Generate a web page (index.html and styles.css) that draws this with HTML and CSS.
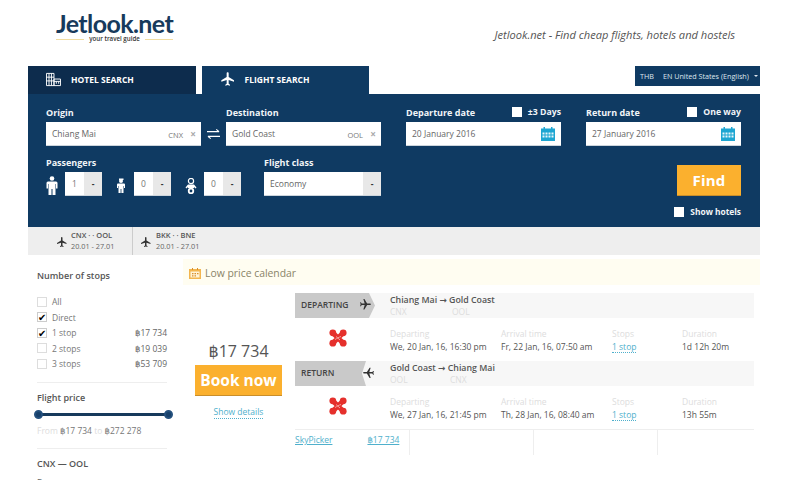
FILE: index.html
```html
<!DOCTYPE html>
<html lang="en">
<head>
<meta charset="utf-8">
<title>Jetlook.net</title>
<link rel="stylesheet" href="styles.css">
</head>
<body>
<svg class="defs" width="0" height="0" aria-hidden="true">
  <defs>
    <symbol id="plane" viewBox="0 0 24 24"><path d="M21 16v-2l-8-5V3.500c0-.83-.67-1.500-1.500-1.500S10 2.670 10 3.500V9l-8 5v2l8-2.500V19l-2 1.500V22l3.500-1 3.500 1v-1.500L13 19v-5.500l8 2.500z"/></symbol>
    <symbol id="cal" viewBox="0 0 16 16"><path fill="#1ea6d2" d="M1 2.500h2.500V1h1.500v1.500h6V1h1.500v1.500H15V15H1z"/><path fill="#e8f6fb" d="M2.500 6.500h2v2h-2zm3 0h2v2h-2zm3 0h2v2h-2zm3 0h2v2h-2zm-9 3h2v2h-2zm3 0h2v2h-2zm3 0h2v2h-2zm3 0h2v2h-2z"/></symbol>
    <symbol id="flower" viewBox="0 0 18 18"><path stroke="#e5302c" stroke-width="5" fill="none" d="M4 4l10 10M14 4L4 14"/><circle cx="3.800" cy="3.800" r="3.400" fill="#e5302c"/><circle cx="14.200" cy="3.800" r="3.400" fill="#e5302c"/><circle cx="3.800" cy="14.200" r="3.400" fill="#e5302c"/><circle cx="14.200" cy="14.200" r="3.400" fill="#e5302c"/><path fill="none" stroke="#f4a19b" stroke-width="1" d="M6 10.500C8 9.500 10 8 12 7.500M7 7.500l4 3.500"/></symbol>
  </defs>
</svg>

<div class="page">
  <header class="top">
    <div class="logo">
      <div class="logo-name">Jetlook.net</div>
      <div class="logo-tag"><span>your travel guide</span></div>
    </div>
    <div class="slogan">Jetlook.net - Find cheap flights, hotels and hostels</div>
  </header>

  <div class="tabbar">
    <div class="tab tab-hotel">
      <svg class="tab-icon" viewBox="0 0 16 14"><path fill="none" stroke="#fff" stroke-width="1" d="M.5.500h8v13h-8zM3.200.500v13M5.800.500v13M.5 4.500h8M.5 8.500h8M8.500 6.500h7v7h-7zM11 9v2.500M13.500 9v2.500M8.500 9h7"/></svg>
      HOTEL SEARCH
    </div>
    <div class="tab tab-flight">
      <svg class="tab-icon plane-right"><use href="#plane"/></svg>
      FLIGHT SEARCH
    </div>
    <div class="locale"><span>THB</span><span>EN United States (English)</span><i class="caret"></i></div>
  </div>

  <section class="panel">
    <div class="pane-left">
      <div class="route">
        <div class="field">
          <label class="lbl">Origin</label>
          <div class="input"><span class="val">Chiang Mai</span><span class="code">CNX</span><span class="x">×</span></div>
        </div>
        <svg class="swap" viewBox="0 0 14 12"><path fill="none" stroke="#fff" stroke-width="1.200" d="M0 3.500h13M10 1l3 2.500M14 8.500H1M4 11L1 8.500"/></svg>
        <div class="field">
          <label class="lbl">Destination</label>
          <div class="input"><span class="val">Gold Coast</span><span class="code">OOL</span><span class="x">×</span></div>
        </div>
      </div>
      <div class="pax-row">
        <div class="pax">
          <label class="lbl">Passengers</label>
          <div class="pax-controls">
            <svg class="person adult" viewBox="0 0 12 19"><circle cx="6" cy="2.500" r="2.300" fill="#fff"/><path fill="#fff" d="M2 5.500h8a1.500 1.500 0 0 1 1.500 1.500v5.500h-1.500V8H9.500v11H6.500v-6h-1v6H2.500V8H2v4.500H.5V7A1.500 1.500 0 0 1 2 5.500z"/></svg>
            <div class="spin"><span>1</span><b>-</b></div>
            <svg class="person child" viewBox="0 0 10 15"><circle cx="5" cy="3" r="2" fill="#fff"/><path fill="#fff" d="M3 .5h4.500v1.500H3zM2 5.500h6a1 1 0 0 1 1 1V10H8v-2h-.500v7H5.400v-4h-.8v4H2.500V8H2v2H1V6.500a1 1 0 0 1 1-1z"/></svg>
            <div class="spin"><span>0</span><b>-</b></div>
            <svg class="person baby" viewBox="0 0 12 16"><circle cx="6" cy="3" r="2.600" fill="none" stroke="#fff" stroke-width="1.200"/><path fill="#fff" d="M3 6.500h6l2.500 3-1 1L9 9v1H3V9l-1.500 1.500-1-1z"/><circle cx="6" cy="13" r="2.300" fill="none" stroke="#fff" stroke-width="1.800"/></svg>
            <div class="spin"><span>0</span><b>-</b></div>
          </div>
        </div>
        <div class="cabin">
          <label class="lbl">Flight class</label>
          <div class="select"><span>Economy</span><b>-</b></div>
        </div>
      </div>
    </div>
    <div class="pane-right">
      <div class="dates">
        <div class="field">
          <div class="lbl-row"><label class="lbl">Departure date</label><span class="check"><i class="box"></i>±3 Days</span></div>
          <div class="input"><span class="val">20 January 2016</span><svg class="cal-icon"><use href="#cal"/></svg></div>
        </div>
        <div class="field">
          <div class="lbl-row"><label class="lbl">Return date</label><span class="check"><i class="box"></i>One way</span></div>
          <div class="input"><span class="val">27 January 2016</span><svg class="cal-icon"><use href="#cal"/></svg></div>
        </div>
      </div>
      <div class="find-col">
        <button class="find">Find</button>
        <span class="check show-hotels"><i class="box"></i>Show hotels</span>
      </div>
    </div>
  </section>

  <nav class="history">
    <div class="hist-item first">
      <svg class="hist-plane"><use href="#plane"/></svg>
      <div><div class="hist-route">CNX · · OOL</div><div class="hist-date">20.01 - 27.01</div></div>
    </div>
    <div class="hist-item">
      <svg class="hist-plane"><use href="#plane"/></svg>
      <div><div class="hist-route">BKK · · BNE</div><div class="hist-date">20.01 - 27.01</div></div>
    </div>
  </nav>

  <div class="body">
    <aside class="filters">
      <h3 class="f-title stops-title">Number of stops</h3>
      <ul class="stops">
        <li><i class="cb"></i><span class="s-name">All</span></li>
        <li><i class="cb on">✔</i><span class="s-name">Direct</span></li>
        <li><i class="cb on">✔</i><span class="s-name">1 stop</span><span class="s-price">฿17 734</span></li>
        <li><i class="cb"></i><span class="s-name">2 stops</span><span class="s-price">฿19 039</span></li>
        <li><i class="cb"></i><span class="s-name">3 stops</span><span class="s-price">฿53 709</span></li>
      </ul>
      <h3 class="f-title price-title">Flight price</h3>
      <div class="slider"><i class="knob"></i><i class="knob"></i></div>
      <div class="range"><em>From</em> ฿17 734 <em>to</em> ฿272 278</div>
      <h3 class="f-title leg-title">CNX — OOL</h3>
      <div class="clip-line">Departure</div>
    </aside>

    <main class="results">
      <div class="calendar">
        <svg class="cal-mini" viewBox="0 0 12 11"><path fill="#f3b54e" d="M0 1h12v10H0z"/><path fill="#fff3d6" d="M1.500 3.500h9v6h-9z"/><path fill="#d98f2b" d="M3 0h1v2H3zm5 0h1v2H8zM3 5h1.500v1.200H3zm2.500 0H7v1.200H5.500zM8 5h1.500v1.200H8zM3 7.200h1.500v1.200H3zm2.500 0H7v1.200H5.500z"/></svg>
        Low price calendar
      </div>
      <div class="offer">
        <div class="buy">
          <div class="big-price">฿17 734</div>
          <button class="book">Book now</button>
          <a class="details">Show details</a>
        </div>
        <div class="legs">
          <div class="leg-head">
            <div class="leg-tag out">DEPARTING<svg class="leg-plane to-right"><use href="#plane"/></svg></div>
            <div class="leg-route">
              <div class="lr-title">Chiang Mai → Gold Coast</div>
              <div class="lr-codes"><span class="c1">CNX</span><span>OOL</span></div>
            </div>
          </div>
          <div class="leg-info">
            <div class="carrier"><svg class="flower"><use href="#flower"/></svg></div>
            <div class="col c-dep"><small>Departing</small><span>We, 20 Jan, 16, 16:30 pm</span></div>
            <div class="col c-arr"><small>Arrival time</small><span>Fr, 22 Jan, 16, 07:50 am</span></div>
            <div class="col c-stop"><small>Stops</small><a>1 stop</a></div>
            <div class="col"><small>Duration</small><span>1d 12h 20m</span></div>
          </div>
          <div class="leg-head">
            <div class="leg-tag back">RETURN</div>
            <svg class="leg-plane to-left"><use href="#plane"/></svg>
            <div class="leg-route">
              <div class="lr-title">Gold Coast → Chiang Mai</div>
              <div class="lr-codes"><span class="c2">OOL</span><span>CNX</span></div>
            </div>
          </div>
          <div class="leg-info">
            <div class="carrier"><svg class="flower"><use href="#flower"/></svg></div>
            <div class="col c-dep"><small>Departing</small><span>We, 27 Jan, 16, 21:45 pm</span></div>
            <div class="col c-arr"><small>Arrival time</small><span>Th, 28 Jan, 16, 08:40 am</span></div>
            <div class="col c-stop"><small>Stops</small><a>1 stop</a></div>
            <div class="col"><small>Duration</small><span>13h 55m</span></div>
          </div>
          <div class="sellers">
            <div class="sell first-sell"><a>SkyPicker</a><a>฿17 734</a></div>
            <div class="sell"></div>
            <div class="sell"></div>
            <div class="sell"></div>
          </div>
        </div>
      </div>
    </main>
  </div>
</div>
</body>
</html>
```
FILE: styles.css
```css
* { box-sizing: border-box; }
html, body { margin: 0; height: 480px; overflow: hidden; background: #fff; }
body { font-family: "Open Sans", "DejaVu Sans", sans-serif; font-size: 9px; color: #555; }
.defs { display: block; height: 0; }
a { color: #4fb0cc; }
ul { list-style: none; margin: 0; padding: 0; }
h3 { margin: 0; }
button { font-family: inherit; border: 0; padding: 0; color: #fff; font-weight: 700; background: #fbb02e; border-bottom: 1px solid #c98e2b; }

.page { width: 732px; margin-left: 28px; }

/* header */
.top { height: 66px; display: flex; justify-content: space-between; padding: 11px 25px 0 28px; }
.logo { width: 117px; }
.logo-name { font-family: Lato, sans-serif; font-weight: 700; font-size: 25px; line-height: 25px; color: #173a5c; letter-spacing: -.6px; white-space: nowrap; }
.logo-tag { display: flex; align-items: center; gap: 5px; font-size: 6.200px; font-weight: 600; color: #333; line-height: 6px; white-space: nowrap; }
.logo-tag::before, .logo-tag::after { content: ""; flex: 1; height: 1px; background: #f0dca0; }
.slogan { font-style: italic; font-size: 11.100px; color: #555; margin-top: 16px; line-height: 16px; }

/* tabs */
.tabbar { height: 28px; display: flex; align-items: flex-start; gap: 6px; }
.tab { height: 28px; width: 167.500px; display: flex; align-items: center; font-weight: 700; font-size: 8.500px; color: #fff; padding-bottom: 2px; }
.tab-hotel { background: #0d2c4d; padding-left: 18px; gap: 10px; }
.tab-flight { background: #0f3a62; padding-left: 18px; gap: 9px; }
.tab-icon { width: 15px; height: 15px; fill: #fff; }
.plane-right { width: 16px; height: 16px; }
.locale { margin-left: auto; width: 125px; height: 20px; background: #0f3a62; color: #dfe6ee; font-size: 7.200px; display: flex; align-items: center; padding-left: 5px; gap: 9px; white-space: nowrap; }
.caret { width: 0; height: 0; border: 2px solid transparent; border-top: 2.500px solid #dfe6ee; border-bottom: 0; margin-left: -4px; }

/* search panel */
.panel { height: 133px; background: #0f3a62; padding: 13px 19px 0 18px; display: flex; gap: 25px; }
.pane-left, .pane-right { width: 335px; }
.lbl { display: block; color: #f2f5f8; font-weight: 700; font-size: 9px; line-height: 11px; height: 15px; white-space: nowrap; }
.route, .dates { display: flex; justify-content: space-between; align-items: flex-end; }
.field { width: 155px; }
.input { height: 24px; background: #fff; display: flex; align-items: center; padding: 0 5px 0 6px; border-bottom: 1px solid #cdd5dc; }
.val { flex: 1; font-size: 8.500px; color: #666; white-space: nowrap; }
.code { font-size: 7.500px; color: #777; margin-top: 2px; }
.x { width: 13px; text-align: right; font-size: 10px; color: #aaa; font-weight: 700; }
.swap { width: 13px; height: 12px; margin-bottom: 6px; }
.pax-row { display: flex; justify-content: space-between; margin-top: 11px; }
.pax-controls { display: flex; align-items: center; }
.person { fill: #fff; flex: none; }
.adult { width: 12px; height: 19px; margin-right: 7px; margin-top: 2px; }
.child { width: 10px; height: 15px; margin: 3px 8px 0 14px; }
.baby { width: 12px; height: 16px; margin: 4px 7px 0 14px; }
.spin { width: 37px; height: 24px; display: flex; background: #fff; border-bottom: 1px solid #cdd5dc; font-size: 8.500px; color: #777; }
.spin span { width: 19px; line-height: 24px; padding-left: 7px; }
.spin b { flex: 1; background: #e8e8e8; text-align: center; line-height: 23px; color: #333; }
.cabin { width: 117px; }
.select { height: 24px; display: flex; background: #fff; border-bottom: 1px solid #cdd5dc; font-size: 8.500px; color: #666; }
.select span { flex: 1; line-height: 24px; padding-left: 6px; }
.select b { width: 18px; background: #e8e8e8; text-align: center; line-height: 23px; color: #333; }
.lbl-row { display: flex; justify-content: space-between; height: 15px; }
.check { display: inline-flex; align-items: flex-start; color: #f2f5f8; font-weight: 700; font-size: 8.700px; line-height: 11px; gap: 6px; white-space: nowrap; }
.box { width: 10px; height: 10px; background: #fff; display: block; }
.cal-icon { width: 16px; height: 16px; margin-right: 0; }
.find-col { display: flex; flex-direction: column; align-items: flex-end; margin-top: 19px; }
.find { width: 64px; height: 31px; font-size: 15px; letter-spacing: .2px; }
.show-hotels { margin-top: 10px; font-size: 8.400px; align-items: center; }

/* history */
.history { height: 28px; background: #eee; display: flex; }
.hist-item { display: flex; align-items: center; gap: 3px; width: 85px; padding-left: 28px; }
.hist-item.first { width: 105px; border-right: 1px solid #ccc; }
.hist-item:not(.first) { padding-left: 7px; gap: 4px; }
.hist-plane { width: 12px; height: 12px; fill: #333; margin-top: 2px; }
.hist-route { font-size: 7.500px; line-height: 11px; color: #555; font-weight: 600; white-space: nowrap; margin-top: 0; }
.hist-date { font-size: 7.300px; line-height: 11px; color: #666; white-space: nowrap; }

/* filter column */
.body { display: flex; }
.filters { width: 155px; padding: 15px 16px 0 9px; }
.f-title { font-size: 9px; font-weight: 600; color: #555; line-height: 12px; white-space: nowrap; }
.stops { margin-top: 12px; padding-bottom: 10px; border-bottom: 1px solid #eee; }
.stops li { height: 15.500px; display: flex; align-items: center; color: #777; font-size: 8.500px; }
.cb { width: 10px; height: 10px; border: 1px solid #ddd; margin-right: 5px; font-style: normal; font-size: 10px; line-height: 8px; color: #000; }
.cb.on { border-color: #ccc; }
.s-name { flex: 1; }
.s-price { font-size: 8.500px; color: #666; }
.price-title { margin-top: 9px; }
.slider { height: 3px; margin: 9px -2px 0 1px; background: #173a5c; display: flex; justify-content: space-between; align-items: center; }
.knob { width: 9px; height: 9px; border-radius: 50%; background: #17406a; display: block; margin: 0 -4px; border: 2px solid #24507d; }
.range { margin-top: 9px; font-size: 8.500px; color: #777; line-height: 12px; padding-bottom: 11px; border-bottom: 1px solid #eee; white-space: nowrap; }
.range em { font-style: normal; color: #ddd; }
.leg-title { margin-top: 9px; }
.clip-line { margin-top: 7px; font-size: 8.500px; color: #666; line-height: 12px; }

/* results */
.results { width: 577px; padding-top: 4px; }
.calendar { height: 26px; background: #fffdf1; display: flex; align-items: center; padding: 2px 0 0 6px; gap: 4px; font-size: 10.400px; color: #8a8468; }
.cal-mini { width: 12px; height: 11px; }
.offer { display: flex; margin-top: 8px; }
.buy { width: 112px; padding: 49px 13px 0 12px; display: flex; flex-direction: column; align-items: center; }
.big-price { font-size: 16px; line-height: 18px; color: #555; }
.book { width: 87px; height: 31px; font-size: 15.500px; margin-top: 5px; }
.details { margin-top: 10px; font-size: 8.500px; line-height: 12px; border-bottom: 1px dotted #4fb0cc; }
.legs { width: 459px; }
.leg-head { height: 25px; background: #f7f7f7; display: flex; align-items: stretch; }
.leg-tag { background: #c9c9c9; display: flex; align-items: center; padding: 0 0 2px 6px; font-size: 8.500px; font-weight: 600; color: #444; }
.leg-tag.out { width: 80px; clip-path: polygon(0 0, 74px 0, 80px 50%, 74px 100%, 0 100%); gap: 9px; }
.leg-tag.back { width: 71px; clip-path: polygon(0 0, 71px 0, 67px 50%, 71px 100%, 0 100%); }
.leg-plane { width: 13px; height: 13px; fill: #333; flex: none; }
.to-right { transform: rotate(90deg); margin-left: 2px; }
.to-left { transform: rotate(-90deg); margin: 5px 0 0 -4px; }
.leg-route { padding: 2px 0 0 15px; }
.lr-title { font-size: 8.800px; font-weight: 600; line-height: 11px; color: #555; white-space: nowrap; }
.lr-codes { display: flex; font-size: 8.500px; line-height: 11px; color: #ddd; }
.lr-codes .c1 { width: 62px; }
.lr-codes .c2 { width: 60px; }
.leg-info { height: 43px; display: flex; padding-top: 10px; }
.carrier { width: 95px; padding: 1px 0 0 34px; }
.flower { width: 18px; height: 18px; display: block; }
.col { display: flex; flex-direction: column; font-size: 8.500px; line-height: 12px; white-space: nowrap; color: #555; gap: 1px; }
.col small { font-size: 8.500px; color: #ddd; }
.c-dep, .c-arr { width: 111px; }
.c-stop { width: 70px; align-items: flex-start; }
.c-stop a { border-bottom: 1px dotted #4fb0cc; line-height: 11px; }
.sellers { height: 26px; border-top: 1px solid #eee; display: flex; }
.sell { width: 124px; flex: none; border-right: 1px solid #eee; }
.first-sell { width: 115px; display: flex; gap: 35px; font-size: 8.500px; padding-top: 4px; line-height: 12px; }
.first-sell a { text-decoration: underline; }
.sell:last-child { border-right: 0; flex: 1; width: auto; }
```
